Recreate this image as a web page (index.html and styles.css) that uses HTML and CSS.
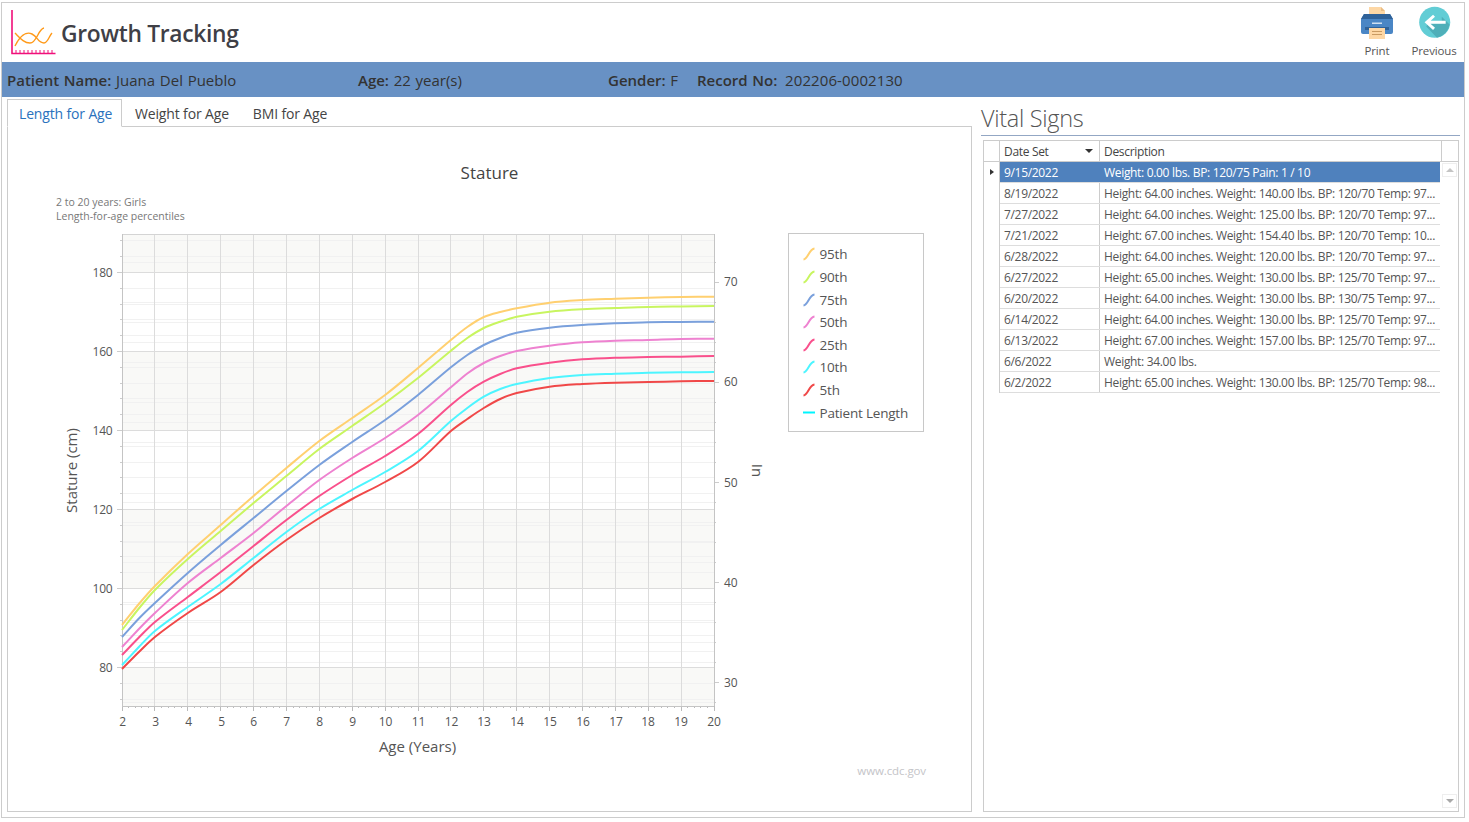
FILE: index.html
```html
<!DOCTYPE html>
<html lang="en">
<head>
<meta charset="utf-8">
<title>Growth Tracking</title>
<link rel="stylesheet" href="styles.css">
</head>
<body>
<div class="window">
  <header class="topbar">
    <div class="brand">
      <svg class="logo" width="46" height="46" viewBox="10 9 46 46" fill="none">
        <path d="M12 10V53.500H55.500" stroke="#f0107a" stroke-width="1.600"/>
        <path d="M16 53V50M20 53V50M24 53V50M28 53V50M32 53V50M36 53V50M40 53V50M44 53V50M48 53V50M52 53V50" stroke="#f0107a" stroke-width="1"/>
        <path d="M15 33C20 38 24 43 30 43C37 43 38 29 44 28" stroke="#ff9a1a" stroke-width="1.400"/>
        <path d="M15 46C20 36 26 31 32 34C38 37 38 43 44 43C48 43 49 36 52 33" stroke="#ff9a1a" stroke-width="1.400"/>
      </svg>
      <h1 class="app-title">Growth Tracking</h1>
    </div>
    <div class="actions">
      <div class="action action-print">
        <svg width="34" height="33" viewBox="1360 6 34 33">
          <path d="M1369 7H1381L1385 11V18H1369Z" fill="#fdd7a5"/>
          <path d="M1381 7V11H1385Z" fill="#e9bd85"/>
          <path d="M1364 14H1390L1393 19V32Q1393 34 1391 34H1363Q1361 34 1361 32V19Z" fill="#4a86c5"/>
          <path d="M1364 14H1390L1393 19H1361Z" fill="#2f6299"/>
          <rect x="1372" y="22.500" width="10" height="1.500" fill="#cfe0f2"/>
          <rect x="1365" y="27" width="24" height="3" fill="#2f6299"/>
          <rect x="1369" y="28" width="16" height="11" fill="#fdd7a5"/>
          <path d="M1372 31.500H1382M1372 34.500H1382" stroke="#c99a62" stroke-width="1"/>
        </svg>
        <span class="action-label">Print</span>
      </div>
      <div class="action action-prev">
        <svg width="34" height="34" viewBox="1418 6 34 34">
          <circle cx="1434.700" cy="22.800" r="16" fill="#62cdd5"/>
          <path d="M1442 17L1450 25A16 16 0 0 1 1437 38.600L1426 27L1428 24L1442 24Z" fill="#4fafb9"/>
          <path d="M1446 22.800H1428M1434 16L1426.500 22.800L1434 29.600" fill="none" stroke="#fff" stroke-width="3"/>
        </svg>
        <span class="action-label">Previous</span>
      </div>
    </div>
  </header>

  <div class="patient-bar">
    <div class="field field-name"><b>Patient Name:</b> Juana Del Pueblo</div>
    <div class="field field-age"><b>Age:</b> 22 year(s)</div>
    <div class="field field-gender"><b>Gender:</b> F</div>
    <div class="field field-record"><b>Record No:</b> <span class="record-no">202206-0002130</span></div>
  </div>

  <main class="content">
    <section class="charts">
      <nav class="tabs">
        <span class="tab tab-active">Length for Age</span>
        <span class="tab tab-weight">Weight for Age</span>
        <span class="tab tab-bmi">BMI for Age</span>
      </nav>
      <div class="tab-panel">
        <svg id="chart" class="chart" width="963" height="684" viewBox="8 127 963 684">
          <g id="plot"></g>
          <text class="c-title" x="489.500" y="179" text-anchor="middle">Stature</text>
          <text class="c-sub" x="56" y="206">2 to 20 years: Girls</text>
          <text class="c-sub" x="56" y="220">Length-for-age percentiles</text>

          <g class="c-num" text-anchor="end">
            <text x="112.500" y="277">180</text><text x="112.500" y="356">160</text><text x="112.500" y="435">140</text>
            <text x="112.500" y="514">120</text><text x="112.500" y="593">100</text><text x="112.500" y="672">80</text>
          </g>
          <g class="c-num">
            <text x="724" y="286">70</text><text x="724" y="386">60</text><text x="724" y="487">50</text>
            <text x="724" y="587">40</text><text x="724" y="687">30</text>
          </g>
          <g class="c-num" text-anchor="middle">
            <text x="122.500" y="726">2</text><text x="155.500" y="726">3</text><text x="188.500" y="726">4</text>
            <text x="221.500" y="726">5</text><text x="253.500" y="726">6</text><text x="286.500" y="726">7</text>
            <text x="319.500" y="726">8</text><text x="352.500" y="726">9</text><text x="385.500" y="726">10</text>
            <text x="418.500" y="726">11</text><text x="451.500" y="726">12</text><text x="484" y="726">13</text>
            <text x="517" y="726">14</text><text x="550" y="726">15</text><text x="583" y="726">16</text>
            <text x="616" y="726">17</text><text x="648" y="726">18</text><text x="681" y="726">19</text><text x="714" y="726">20</text>
          </g>
          <text class="c-axis" x="417.500" y="752" text-anchor="middle">Age (Years)</text>
          <text class="c-axis" transform="translate(77 470.500) rotate(-90)" text-anchor="middle">Stature (cm)</text>
          <text class="c-axis" transform="translate(752 470.500) rotate(90)" text-anchor="middle">In</text>
          <text class="c-credit" x="926" y="775" text-anchor="end">www.cdc.gov</text>

          <rect class="legend-box" x="788.500" y="233.500" width="135" height="198"/>
          <g id="legend-marks"></g>
          <g class="c-legend">
            <text x="819.500" y="259">95th</text><text x="819.500" y="282">90th</text><text x="819.500" y="305">75th</text>
            <text x="819.500" y="327">50th</text><text x="819.500" y="350">25th</text><text x="819.500" y="372">10th</text>
            <text x="819.500" y="395">5th</text><text x="819.500" y="418">Patient Length</text>
          </g>
        </svg>
      </div>
    </section>

    <aside class="vitals">
      <h2 class="vitals-title">Vital Signs</h2>
      <div class="grid">
        <div class="row row-head">
          <span class="cell-mark"></span>
          <span class="cell-date">Date Set<i class="sort-arrow"></i></span>
          <span class="cell-desc">Description</span>
          <span class="cell-corner"></span>
        </div>
        <div class="grid-body">
          <div class="rows">
            <div class="row row-selected"><span class="cell-mark"><i class="row-arrow"></i></span><span class="cell-date">9/15/2022</span><span class="cell-desc">Weight: 0.00 lbs. BP: 120/75 Pain: 1 / 10</span></div>
            <div class="row"><span class="cell-mark"></span><span class="cell-date">8/19/2022</span><span class="cell-desc">Height: 64.00 inches. Weight: 140.00 lbs. BP: 120/70 Temp: 97...</span></div>
            <div class="row"><span class="cell-mark"></span><span class="cell-date">7/27/2022</span><span class="cell-desc">Height: 64.00 inches. Weight: 125.00 lbs. BP: 120/70 Temp: 97...</span></div>
            <div class="row"><span class="cell-mark"></span><span class="cell-date">7/21/2022</span><span class="cell-desc">Height: 67.00 inches. Weight: 154.40 lbs. BP: 120/70 Temp: 10...</span></div>
            <div class="row"><span class="cell-mark"></span><span class="cell-date">6/28/2022</span><span class="cell-desc">Height: 64.00 inches. Weight: 120.00 lbs. BP: 120/70 Temp: 97...</span></div>
            <div class="row"><span class="cell-mark"></span><span class="cell-date">6/27/2022</span><span class="cell-desc">Height: 65.00 inches. Weight: 130.00 lbs. BP: 125/70 Temp: 97...</span></div>
            <div class="row"><span class="cell-mark"></span><span class="cell-date">6/20/2022</span><span class="cell-desc">Height: 64.00 inches. Weight: 130.00 lbs. BP: 130/75 Temp: 97...</span></div>
            <div class="row"><span class="cell-mark"></span><span class="cell-date">6/14/2022</span><span class="cell-desc">Height: 64.00 inches. Weight: 130.00 lbs. BP: 125/70 Temp: 97...</span></div>
            <div class="row"><span class="cell-mark"></span><span class="cell-date">6/13/2022</span><span class="cell-desc">Height: 67.00 inches. Weight: 157.00 lbs. BP: 125/70 Temp: 97...</span></div>
            <div class="row"><span class="cell-mark"></span><span class="cell-date">6/6/2022</span><span class="cell-desc">Weight: 34.00 lbs.</span></div>
            <div class="row"><span class="cell-mark"></span><span class="cell-date">6/2/2022</span><span class="cell-desc">Height: 65.00 inches. Weight: 130.00 lbs. BP: 125/70 Temp: 98...</span></div>
          </div>
          <div class="scrollbar">
            <span class="scroll-btn"><i class="tri-up"></i></span>
            <span class="scroll-btn"><i class="tri-down"></i></span>
          </div>
        </div>
      </div>
    </aside>
  </main>
</div>
<script src="chart.js"></script>
</body>
</html>
```

FILE: styles.css
```css
* { box-sizing: border-box; }
html, body { margin: 0; padding: 0; background: #fff; }
body {
  font-family: "Open Sans", "Noto Sans", "Liberation Sans", sans-serif;
  color: #444;
  width: 1469px;
  height: 822px;
  overflow: hidden;
  padding: 2px 0 0 1px;
}
.window {
  width: 1464px;
  height: 816px;
  border: 1px solid #ccc;
  display: flex;
  flex-direction: column;
}
.topbar {
  height: 59px;
  display: flex;
  justify-content: space-between;
  flex: none;
}
.brand { display: flex; align-items: flex-start; }
.logo { margin: 6px 0 0 8px; flex: none; }
.app-title {
  margin: 13px 0 0 5px;
  font-size: 22.800px;
  line-height: 36px;
  font-weight: 600;
  color: #3f3f46;
  letter-spacing: -0.3px;
}
.actions { display: flex; }
.action { display: flex; flex-direction: column; align-items: center; }
.action-print { width: 34px; margin-right: 10px; padding-top: 3px; }
.action-prev { width: 60px; padding-top: 3px; }
.action-prev svg { margin-left: 2px; }
.action svg { display: block; height: 33px; flex: none; }
.action-label { font-size: 11.500px; line-height: 16px; margin-top: 4px; color: #555; white-space: nowrap; letter-spacing: -0.15px; }

.patient-bar {
  height: 35px;
  background: #6891c4;
  display: flex;
  align-items: center;
  padding: 1px 0 0 5px;
  font-size: 15px;
  color: #333;
  flex: none;
  word-spacing: 0.8px;
}
.field { white-space: nowrap; }
.field b { font-weight: 600; }
.field-name { width: 351px; }
.field-age { width: 250px; }
.field-gender { width: 89px; }
.record-no { margin-left: 3px; letter-spacing: 0.1px; }

.content { flex: 1; display: flex; min-height: 0; }
.charts { width: 970px; padding: 2px 0 5px 5px; display: flex; flex-direction: column; flex: none; }
.tabs { height: 27px; display: flex; flex: none; font-size: 14px; color: #444; letter-spacing: -0.15px; }
.tab { line-height: 30px; white-space: nowrap; }
.tab-active {
  width: 115px;
  height: 28px;
  padding-left: 11px;
  line-height: 28px;
  color: #2a72bd;
  border: 1px solid #ccc;
  border-bottom: 1px solid #fff;
  background: #fff;
  position: relative;
  z-index: 1;
}
.tab-weight { margin-left: 13px; }
.tab-bmi { margin-left: 24px; }
.tab-panel { flex: 1; border: 1px solid #ccc; min-height: 0; }
.chart { display: block; }
.c-title { font-size: 17px; fill: #444; }
.c-sub { font-size: 10.500px; fill: #777; }
.c-num { font-size: 12px; fill: #555; letter-spacing: -0.2px; }
.c-axis { font-size: 15px; fill: #555; }
.c-credit { font-size: 11.500px; fill: #c4c4c8; letter-spacing: -0.1px; }
.c-legend { font-size: 13.500px; fill: #555; letter-spacing: -0.2px; }
.legend-box { fill: #fff; stroke: #c8c8c8; stroke-width: 1; }

.vitals { flex: 1; padding: 4px 4px 5px 9px; display: flex; flex-direction: column; min-width: 0; }
.vitals-title {
  margin: 0;
  height: 35px;
  font-size: 23.500px;
  line-height: 35px;
  font-weight: 300;
  color: #555;
  border-bottom: 1px solid #93a7c4;
  flex: none;
  letter-spacing: -0.3px;
}
.grid {
  margin: 4px 1px 0 2px;
  flex: 1;
  border: 1px solid #ccc;
  display: flex;
  flex-direction: column;
  min-height: 0;
  font-size: 12px;
  color: #555;
  letter-spacing: -0.32px;
}
.row { display: flex; height: 21px; line-height: 22px; }
.row-head { height: 21px; border-bottom: 1px solid #ccc; flex: none; color: #444; }
.cell-mark { width: 16px; border-right: 1px solid #ccc; flex: none; position: relative; }
.cell-date { width: 100px; padding-left: 4px; border-right: 1px solid #ccc; flex: none; position: relative; white-space: nowrap; }
.cell-desc { width: 340px; padding-left: 4px; flex: none; white-space: nowrap; overflow: hidden; }
.row-head .cell-desc { width: 341px; }
.cell-corner { flex: 1; border-left: 1px solid #ccc; }
.sort-arrow {
  position: absolute; right: 6px; top: 8px;
  border-left: 4px solid transparent; border-right: 4px solid transparent; border-top: 4px solid #333;
}
.row-arrow {
  position: absolute; left: 6px; top: 7px;
  border-top: 3.500px solid transparent; border-bottom: 3.500px solid transparent; border-left: 4px solid #333;
}
.grid-body { flex: 1; display: flex; min-height: 0; }
.rows { width: 456px; flex: none; }
.rows .row { border-bottom: 1px solid #ddd; }
.rows .cell-mark { margin-bottom: -1px; background: #fff; }
.row-selected { background: #4f81bd; color: #fff; }
.row-selected .cell-date { border-right-color: #4f81bd; }
.scrollbar { flex: 1; display: flex; flex-direction: column; justify-content: space-between; padding: 1px 1px 3px 2px; }
.scroll-btn { width: 15px; height: 14px; border: 1px solid #eee; display: flex; align-items: center; justify-content: center; }
.tri-up { border-left: 4px solid transparent; border-right: 4px solid transparent; border-bottom: 4px solid #c4c4c4; }
.tri-down { border-left: 4px solid transparent; border-right: 4px solid transparent; border-top: 4px solid #a8a8a8; }
```

FILE: chart.js
```js
(function () {
  var NS = 'http://www.w3.org/2000/svg';
  var plot = document.getElementById('plot');
  var marks = document.getElementById('legend-marks');

  function el(parent, name, attrs) {
    var n = document.createElementNS(NS, name);
    Object.keys(attrs).forEach(function (k) { n.setAttribute(k, attrs[k]); });
    parent.appendChild(n);
    return n;
  }
  function hline(y, x1, x2, c) {
    var p = Math.round(y) + 0.5;
    el(plot, 'line', { x1: x1, x2: x2, y1: p, y2: p, stroke: c, 'stroke-width': 1 });
  }
  function vline(x, y1, y2, c) {
    var p = Math.floor(x) + 0.5;
    el(plot, 'line', { x1: p, x2: p, y1: y1, y2: y2, stroke: c, 'stroke-width': 1 });
  }

  var LEFT = 122, RIGHT = 714, TOP = 234, BOTTOM = 706;
  var STEP_X = (RIGHT - LEFT) / 18;
  var CM = [272, 351, 430, 509, 588, 667];

  // alternating bands
  [[TOP, 272], [351, 430], [509, 588], [667, BOTTOM]].forEach(function (b) {
    el(plot, 'rect', { x: LEFT, y: b[0], width: RIGHT - LEFT, height: b[1] - b[0], fill: '#f9f9f7' });
  });

  // minor cm lines with ticks on the left axis
  for (var y = 272 - 15.8 * 2; y < BOTTOM; y += 15.8) {
    var major = CM.some(function (m) { return Math.abs(m - y) < 1; });
    if (!major) {
      hline(y, LEFT, RIGHT, '#f1f1f1');
      hline(y, LEFT - 2, LEFT, '#ccc');
    }
  }
  // minor inch lines with ticks on the right axis
  for (var yi = 261.5; yi < BOTTOM; yi += 20.03) {
    var isMajor = Math.abs(((yi - 281.5) / 100.25) - Math.round((yi - 281.5) / 100.25)) < 0.02;
    if (!isMajor) hline(yi, LEFT, RIGHT, '#f1f1f1');
    hline(yi, RIGHT, RIGHT + (isMajor ? 5 : 2), '#ccc');
  }
  // vertical year lines and ticks
  for (var a = 0; a <= 18; a++) {
    var x = LEFT + a * STEP_X;
    vline(x, TOP, BOTTOM, '#dcdcdc');
    vline(x, BOTTOM, BOTTOM + 5, '#bbb');
    if (a < 18) for (var t = 1; t < 5; t++) vline(x + t * STEP_X / 5, BOTTOM, BOTTOM + 2, '#bbb');
  }
  // major cm lines
  CM.forEach(function (m) {
    hline(m, LEFT, RIGHT, '#dcdcdc');
    hline(m, LEFT - 5, LEFT, '#ccc');
  });
  // frame
  hline(TOP, LEFT, RIGHT, '#d4d4d4');
  hline(BOTTOM, LEFT, RIGHT, '#c4c4c4');
  vline(LEFT, TOP, BOTTOM, '#c4c4c4');
  vline(RIGHT, TOP, BOTTOM, '#c4c4c4');

  // percentile curves: pixel y at each knot age
  var AGES = [2, 2.5, 3, 4, 5, 6, 7, 8, 9, 10, 11, 12, 12.5, 13, 13.5, 14, 15, 16, 17, 18, 19, 20];
  var curves = [
    ['#ffd070', [625, 604.5, 586, 554, 525, 496, 468, 441, 418, 395, 368, 340, 327, 317, 312, 308.3, 302.7, 300, 298.7, 297.7, 297, 296.7]],
    ['#c8f560', [630, 609, 590, 559, 531, 503, 476, 449, 426, 403, 378, 350.7, 338, 328, 321.7, 316.7, 311.7, 309.3, 308, 306.9, 306.5, 306]],
    ['#7aa0dc', [637, 619, 603, 573, 545, 518, 491, 465, 442, 420, 395, 367.3, 355, 345, 338, 332.7, 327.7, 325, 323.3, 322.3, 322, 321.7]],
    ['#ee82d0', [647, 629.5, 613, 583, 558, 533, 506, 480, 458, 438, 415, 387.3, 373.5, 363, 356, 351, 345.7, 342.3, 340.7, 340, 339, 338.7]],
    ['#f9508c', [655, 638, 622, 597, 572, 546, 520, 496, 475, 456, 434, 405, 392, 381.7, 374, 368.3, 362.7, 359.3, 357.7, 357, 356.7, 356]],
    ['#4df5ff', [665, 647.5, 631, 607, 584, 558, 532, 509, 490, 472, 451, 421, 408, 396.7, 389, 384, 378, 375, 373.7, 372.7, 372.3, 372]],
    ['#f04848', [669, 652.5, 637, 613, 592, 565, 540, 518, 499, 482, 462, 431, 419, 408, 399, 393, 386.7, 384, 382.7, 382, 381.3, 381]]
  ];
  function spline(ys) {
    var pts = ys.map(function (v, i) { return [LEFT + (AGES[i] - 2) * STEP_X, v]; });
    var d = 'M' + pts[0][0].toFixed(1) + ' ' + pts[0][1];
    function slope(i) {
      var a = pts[Math.max(i - 1, 0)], b = pts[Math.min(i + 1, pts.length - 1)];
      return (b[1] - a[1]) / (b[0] - a[0]);
    }
    for (var i = 0; i < pts.length - 1; i++) {
      var p1 = pts[i], p2 = pts[i + 1], h = (p2[0] - p1[0]) / 3;
      d += 'C' + (p1[0] + h).toFixed(1) + ' ' + (p1[1] + slope(i) * h).toFixed(1) +
           ' ' + (p2[0] - h).toFixed(1) + ' ' + (p2[1] - slope(i + 1) * h).toFixed(1) +
           ' ' + p2[0].toFixed(1) + ' ' + p2[1];
    }
    return d;
  }
  curves.forEach(function (c) {
    el(plot, 'path', { d: spline(c[1]), fill: 'none', stroke: c[0], 'stroke-width': 2 });
  });

  // legend marks
  var rows = [254, 277, 300, 322, 345, 367, 390];
  curves.forEach(function (c, i) {
    var r = rows[i];
    el(marks, 'path', {
      d: 'M803.500 ' + (r + 5.500) + 'C808 ' + (r + 5) + ' 809 ' + (r - 5) + ' 814.500 ' + (r - 5.500),
      fill: 'none', stroke: c[0], 'stroke-width': 2
    });
  });
  el(marks, 'line', { x1: 803, x2: 815, y1: 412.500, y2: 412.500, stroke: '#00f5ff', 'stroke-width': 2 });
})();
```
